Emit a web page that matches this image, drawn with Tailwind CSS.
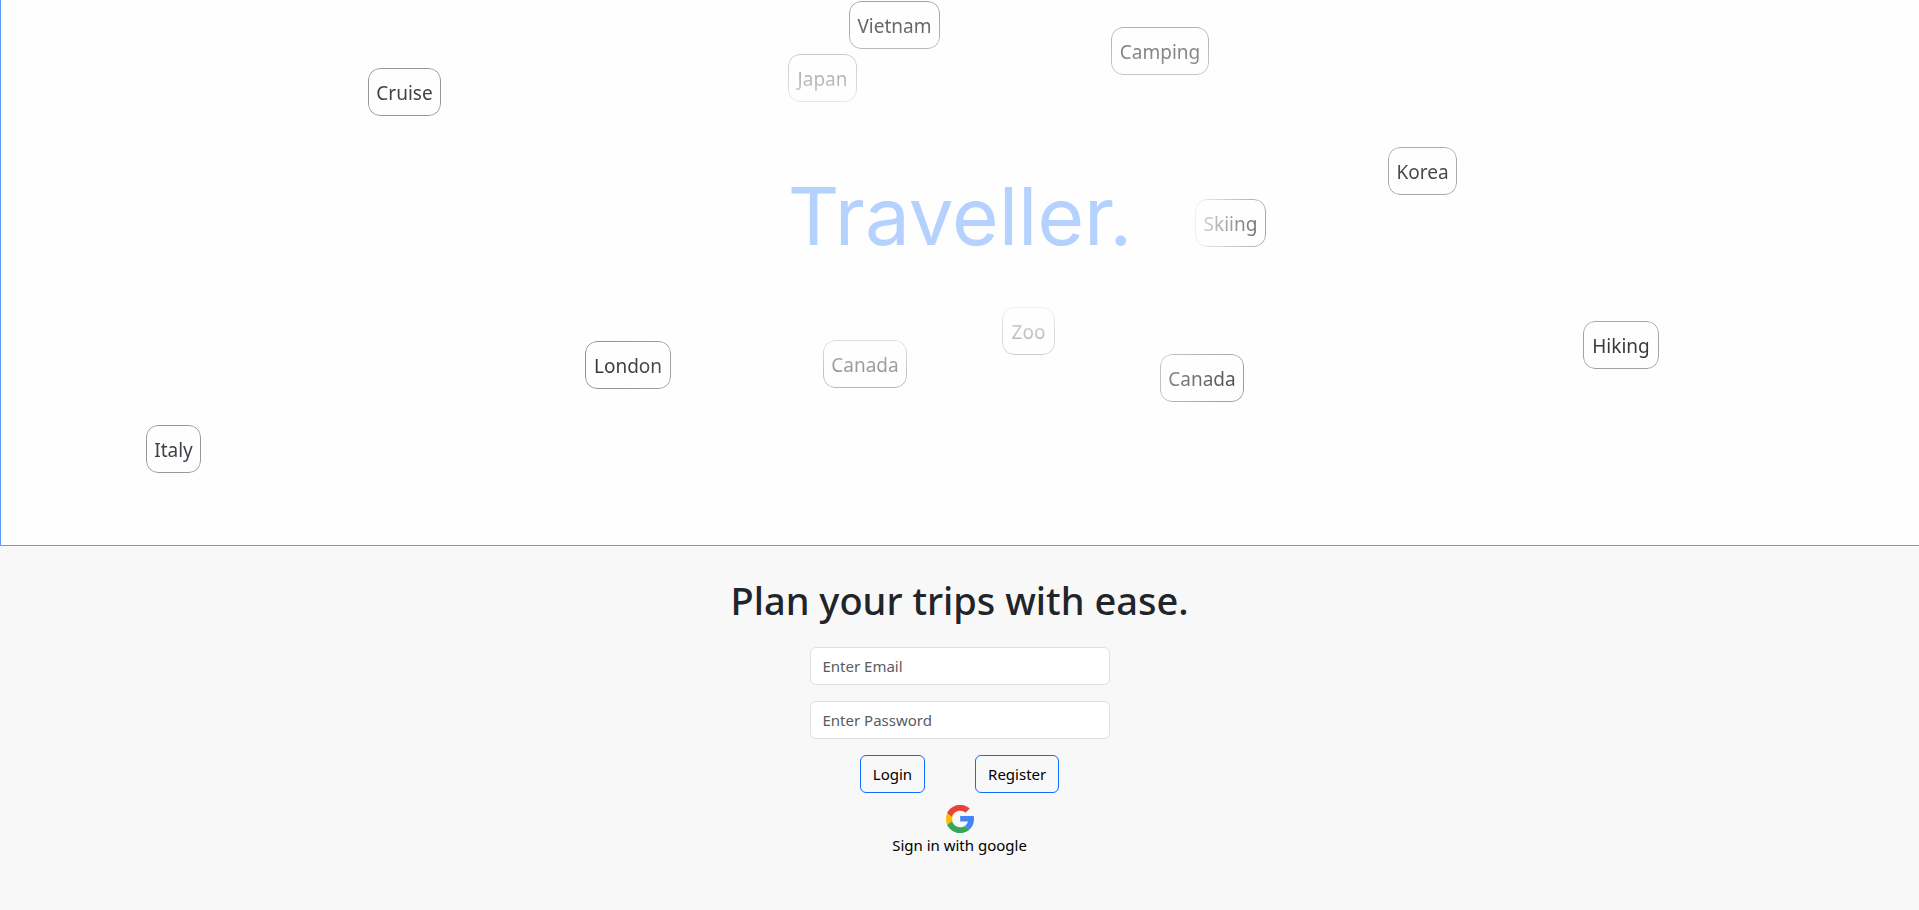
<!DOCTYPE html>
<html lang="en">
<head>
<meta charset="utf-8">
<meta name="viewport" content="width=device-width, initial-scale=1">
<title>Traveller</title>
<script src="https://cdn.jsdelivr.net/npm/@tailwindcss/browser@4"></script>
</head>
<body class="flex min-h-screen flex-col bg-[#f8f8f8] font-['Segoe_UI','Noto_Sans',sans-serif] text-[#212529]">
  <header class="relative flex h-[60vh] items-center justify-center overflow-hidden border-b border-l border-[#5e9bf5] bg-[#fefefe]">
    <h2 class="pb-[114px] font-['Inter',sans-serif] text-[80px] leading-none text-[#b5d2ff]">Traveller.</h2>
    <ul class="text-[19px] leading-[30px] text-[#212529]">
      <li class="absolute top-px left-[calc(50%-111px)] w-[91px] rounded-xl border border-[#888] pt-[9px] pb-[7px] text-center [mask-image:linear-gradient(#000c,#0009)]">Vietnam</li>
      <li class="absolute top-[54px] left-[calc(50%-172px)] w-[69px] rounded-xl border border-[#888] pt-[9px] pb-[7px] text-center [mask-image:linear-gradient(#0007,#0003)]">Japan</li>
      <li class="absolute top-[27px] left-[calc(50%+151px)] w-[98px] rounded-xl border border-[#888] pt-[9px] pb-[7px] text-center [mask-image:linear-gradient(#000a,#0007)]">Camping</li>
      <li class="absolute top-[68px] left-[calc(50%-592px)] w-[73px] rounded-xl border border-[#888] pt-[9px] pb-[7px] text-center [mask-image:linear-gradient(#000d,#000d)]">Cruise</li>
      <li class="absolute top-[147px] left-[calc(50%+428px)] w-[69px] rounded-xl border border-[#999] pt-[9px] pb-[7px] text-center [mask-image:linear-gradient(#000c,#000d)]">Korea</li>
      <li class="absolute top-[199px] left-[calc(50%+235px)] w-[71px] rounded-xl border border-[#888] pt-[9px] pb-[7px] text-center [mask-image:linear-gradient(to_right,#0002,#000b)]">Skiing</li>
      <li class="absolute top-[307px] left-[calc(50%+42px)] w-[53px] rounded-xl border border-[#888] pt-[9px] pb-[7px] text-center [mask-image:linear-gradient(#0002,#0006)]">Zoo</li>
      <li class="absolute top-[340px] left-[calc(50%-137px)] w-[84px] rounded-xl border border-[#888] pt-[9px] pb-[7px] text-center [mask-image:linear-gradient(#0004,#0009)]">Canada</li>
      <li class="absolute top-[354px] left-[calc(50%+200px)] w-[84px] rounded-xl border border-[#888] pt-[9px] pb-[7px] text-center [mask-image:linear-gradient(120deg,#0007,#000d)]">Canada</li>
      <li class="absolute top-[341px] left-[calc(50%-375px)] w-[86px] rounded-xl border border-[#888] pt-[9px] pb-[7px] text-center [mask-image:linear-gradient(to_right,#000e,#000c)]">London</li>
      <li class="absolute top-[321px] left-[calc(50%+623px)] w-[76px] rounded-xl border border-[#999] pt-[9px] pb-[7px] text-center [mask-image:linear-gradient(#000d,#000e)]">Hiking</li>
      <li class="absolute top-[425px] left-[calc(50%-814px)] w-[55px] rounded-xl border border-[#888] pt-[9px] pb-[7px] text-center [mask-image:linear-gradient(#000d,#000d)]">Italy</li>
    </ul>
  </header>

  <main class="flex flex-col items-center pt-[30px] text-[15px] leading-6">
    <h1 class="text-[38px] leading-[48px] font-medium">Plan your trips with ease.</h1>
    <form class="mt-[23px] flex w-[300px] flex-col gap-4">
      <input type="email" aria-label="Email" placeholder="Enter Email" class="rounded-md border border-[#dee2e6] bg-white px-3 py-1.5 placeholder:text-[#595c5f]">
      <input type="password" aria-label="Password" placeholder="Enter Password" class="rounded-md border border-[#dee2e6] bg-white px-3 py-1.5 placeholder:text-[#595c5f]">
      <div class="flex justify-center gap-[50px] text-black">
        <button type="submit" class="rounded-md border border-[#0d6efd] px-3 py-1.5">Login</button>
        <button type="button" class="rounded-md border border-[#0d6efd] px-3 py-1.5">Register</button>
      </div>
    </form>
    <button type="button" class="mt-3 flex flex-col items-center text-black">
      <svg class="size-7" viewBox="2 2 44 44" aria-hidden="true">
        <path fill="#fbbc05" d="M9.8 24c0-1.5.3-3 .7-4.400L2.600 13.600C1.100 16.700.2 20.300.2 24s.9 7.300 2.400 10.400l7.900-6c-.4-1.400-.7-2.900-.7-4.400" transform="translate(1.800 0)"/>
        <path fill="#ea4335" d="M23.700 10.100c3.300 0 6.300 1.200 8.600 3.100L39.200 6.400C35 2.800 29.700.5 23.700.5 14.400.5 6.400 5.800 2.600 13.600l7.900 6c1.800-5.500 7-9.500 13.200-9.500" transform="translate(1.300 1.300) scale(.97)"/>
        <path fill="#34a853" d="M23.700 37.900c-6.200 0-11.400-4-13.200-9.500l-7.900 6c3.800 7.800 11.800 13.100 21.100 13.100 5.700 0 11.200-2 15.300-5.800l-7.500-5.800c-2.100 1.300-4.800 2-7.800 2" transform="translate(1.300 .1) scale(.97)"/>
        <path fill="#4285f4" d="M46.100 24c0-1.400-.2-2.900-.5-4.300H23.700v9.100h12.600c-.6 3.100-2.400 5.500-4.900 7.100l7.500 5.800c4.400-4 7.200-10.100 7.200-17.700" transform="translate(1.300 .1) scale(.97)"/>
      </svg>
      <span>Sign in with google</span>
    </button>
  </main>
</body>
</html>
